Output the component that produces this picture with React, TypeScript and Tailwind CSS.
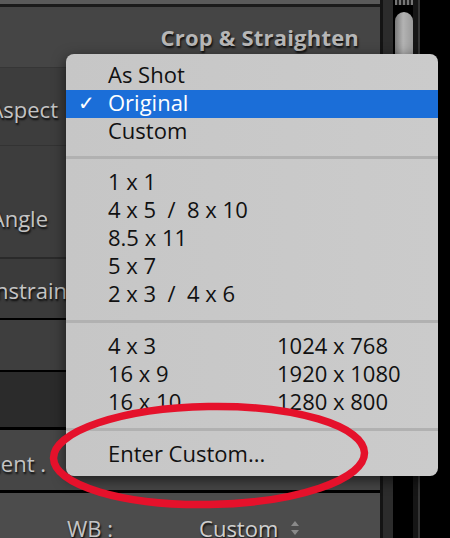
import React from 'react';

interface MenuRow {
  left: string;
  right?: string;
  checked?: boolean;
}

const groups: MenuRow[][] = [
  [{ left: 'As Shot' }, { left: 'Original', checked: true }, { left: 'Custom' }],
  [
    { left: '1 x 1' },
    { left: '4 x 5  /  8 x 10' },
    { left: '8.5 x 11' },
    { left: '5 x 7' },
    { left: '2 x 3  /  4 x 6' },
  ],
  [
    { left: '4 x 3', right: '1024 x 768' },
    { left: '16 x 9', right: '1920 x 1080' },
    { left: '16 x 10', right: '1280 x 800' },
  ],
  [{ left: 'Enter Custom...' }],
];

const label = 'text-[22px] text-[#c4c4c4] whitespace-nowrap [text-shadow:1px_2px_2px_rgba(0,0,0,0.85)]';

const Item: React.FC<{ row: MenuRow }> = ({ row }) => (
  <div
    className={`grid grid-cols-[42px_169px_1fr] h-[28px] items-center leading-[25px] pb-[3px] whitespace-pre ${
      row.checked ? 'bg-[#1b6ed8] text-white' : 'text-[#111]'
    }`}
  >
    <span className="pl-[12px] text-[20px]">{row.checked ? '✓' : ''}</span>
    <span>{row.left}</span>
    <span>{row.right || ''}</span>
  </div>
);

const Separator: React.FC<{ h: string }> = ({ h }) => (
  <div className={`flex items-center ${h}`}>
    <div className="h-[3px] w-full bg-[#b1b1b1]" />
  </div>
);

const App: React.FC = () => {
  return (
    <div className="relative w-[450px] h-[538px] overflow-hidden bg-black flex font-['Open_Sans',sans-serif]">
      {/* develop panel behind the menu */}
      <div className="w-[380px] flex flex-col overflow-hidden">
        <div className="h-[4px] shrink-0 bg-[#5a5a5a]" />
        <div className="h-[3px] shrink-0 bg-[#1b1b1b]" />
        <div className="h-[60px] shrink-0 bg-[#454545] flex items-center justify-end pr-[21px]">
          <span className="text-[22px] font-bold tracking-[0.2px] text-[#b6b6b6] [text-shadow:1px_2px_2px_rgba(0,0,0,0.8)]">
            Crop &amp; Straighten
          </span>
        </div>
        <div className="h-[1px] shrink-0 bg-[#363636]" />
        <div className="h-[77px] shrink-0 bg-[#3d3d3d] flex items-center pt-[5px]">
          <div className="w-[58px] flex justify-end">
            <span className={label}>Aspect</span>
          </div>
        </div>
        <div className="h-[1px] shrink-0 bg-[#333]" />
        <div className="h-[111px] shrink-0 bg-[#3d3d3d] flex items-center pt-[33px]">
          <div className="w-[48px] flex justify-end">
            <span className={label}>Angle</span>
          </div>
        </div>
        <div className="h-[2px] shrink-0 bg-[#2a2a2a]" />
        <div className="h-[59px] shrink-0 bg-[#3b3b3b] flex items-center pt-[3px]">
          <div className="w-[67px] flex justify-end">
            <span className={label}>Constrain</span>
          </div>
        </div>
        <div className="h-[2px] shrink-0 bg-black" />
        <div className="h-[50px] shrink-0 bg-[#3e3e3e]" />
        <div className="h-[2px] shrink-0 bg-black" />
        <div className="h-[55px] shrink-0 bg-[#2b2b2b]" />
        <div className="h-[3px] shrink-0 bg-black" />
        <div className="h-[60px] shrink-0 bg-[#464646] flex items-center pt-[6px]">
          <div className="w-[46px] flex justify-end">
            <span className={label}>Treatment .</span>
          </div>
        </div>
        <div className="h-[3px] shrink-0 bg-black" />
        <div className="flex-1 min-h-0 bg-[#4c4c4c] flex items-start pt-[21px] leading-[28px]">
          <span className={`${label} ml-[67px] text-[#bdbdbd]`}>WB :</span>
          <span className={`${label} ml-[86px] text-[#cfcfcf]`}>Custom</span>
          <svg className="ml-[10px] mt-[4px] shrink-0" width="14" height="20" viewBox="0 0 14 20">
            <path d="M3 8 L7 3 L11 8 Z" fill="#8a8a8a" />
            <path d="M3 12 L7 17 L11 12 Z" fill="#8a8a8a" />
          </svg>
        </div>
      </div>

      {/* scrollbar strip */}
      <div className="flex-1 flex">
        <div className="w-[3px] bg-[#141414]" />
        <div className="w-[10px] bg-[#2c2c2c]" />
        <div className="w-[2px] bg-black" />
        <div className="w-[18px] flex flex-col">
          <div className="h-[5px] bg-[repeating-linear-gradient(90deg,#777_0px,#777_2px,#222_2px,#222_4px)]" />
          <div className="h-[7px]" />
          <div className="h-[420px] rounded-t-full bg-[linear-gradient(90deg,#7a7a7a,#b3b3b3_45%,#9a9a9a)]" />
        </div>
        <div className="w-[5px] bg-[#161616]" />
        <div className="w-[2px] bg-[#353535]" />
        <div className="flex-1 bg-black" />
      </div>

      {/* popup menu */}
      <div className="absolute left-[66px] top-[54px] w-[372px] rounded-[8px] bg-[linear-gradient(90deg,#c6c6c6,#cbcbcb)] pt-[8px] pb-[7px] text-[22px] shadow-[0_4px_14px_rgba(0,0,0,0.6)]">
        {groups.map((g, gi) => (
          <React.Fragment key={gi}>
            {gi > 0 && <Separator h={gi === 1 ? 'h-[23px]' : 'h-[24px]'} />}
            {g.map((row, ri) => (
              <Item key={ri} row={row} />
            ))}
          </React.Fragment>
        ))}
      </div>

      {/* red annotation ring */}
      <svg className="absolute inset-0 pointer-events-none" width="450" height="538" viewBox="0 0 450 538">
        <ellipse
          cx="209"
          cy="455.5"
          rx="155.5"
          ry="49"
          fill="none"
          stroke="#e5112b"
          strokeWidth="7.5"
          transform="rotate(-1 209 455.5)"
        />
      </svg>
    </div>
  );
};

export default App;
